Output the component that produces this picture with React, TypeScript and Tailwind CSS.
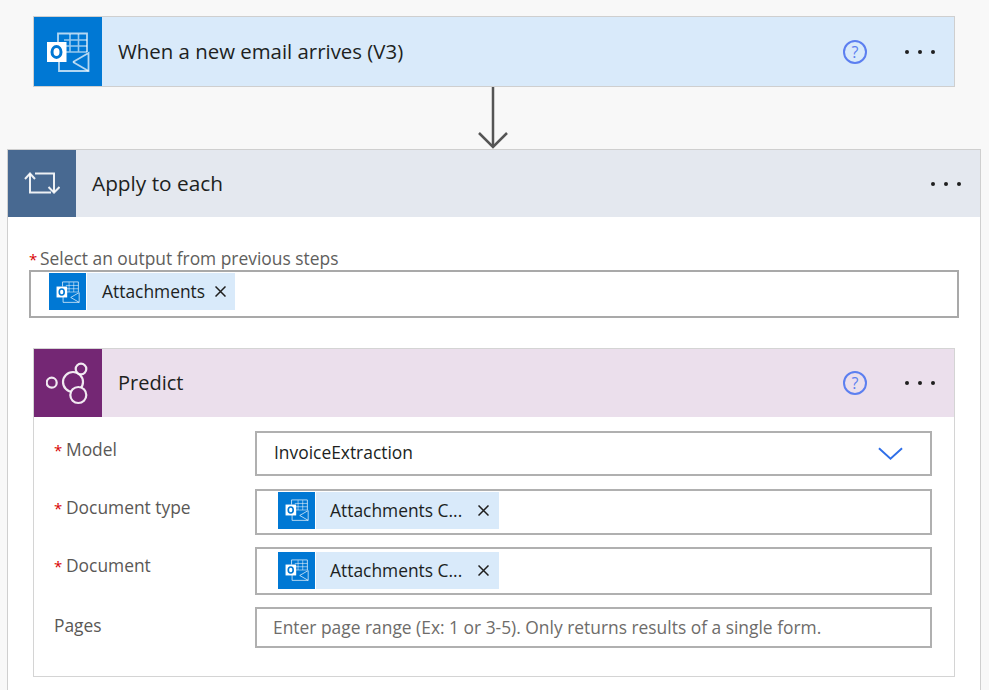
import { ReactNode } from 'react'

const FONT = 'font-["Open_Sans","Noto_Sans",sans-serif]'

function OutlookIcon({ size }: { size: number }) {
  return (
    <svg width={size} height={size} viewBox="0 0 44 44" fill="none">
      <path d="M12 12V3.500h29V22" stroke="#fff" strokeOpacity="0.7" strokeWidth="1.800" />
      <path d="M24 4v18M32.500 4v18M18 10h23M18 16h23M18 22h23" stroke="#fff" strokeOpacity="0.6" strokeWidth="1.600" />
      <path d="M13 30v11h29.500V23L27 32" stroke="#fff" strokeOpacity="0.7" strokeWidth="1.800" />
      <path d="M27 32l15.500 9" stroke="#fff" strokeOpacity="0.7" strokeWidth="1.800" />
      <rect x="1" y="12" width="19.500" height="20" fill="#fff" />
      <ellipse cx="10.500" cy="22" rx="4.500" ry="5.500" stroke="#0078d4" strokeWidth="3" />
    </svg>
  )
}

function PredictIcon() {
  return (
    <svg width="44" height="44" viewBox="0 0 44 44" fill="none" stroke="#fff" strokeOpacity="0.9" strokeWidth="2.200">
      <circle cx="5.700" cy="21.700" r="5" />
      <circle cx="27" cy="21" r="10" />
      <circle cx="35" cy="8" r="5.300" fill="#742774" />
      <circle cx="32.300" cy="34" r="8" fill="#742774" />
    </svg>
  )
}

function LoopIcon() {
  return (
    <svg width="36" height="28" viewBox="0 0 36 28" fill="none" stroke="#fff" strokeOpacity="0.9" strokeWidth="2">
      <path d="M6 4v18.500h21" />
      <path d="M1 9l5-5.500 5 5.500" />
      <path d="M11 3.500h19V22" />
      <path d="M24.500 17l5.500 5.500 5.500-5.500" />
    </svg>
  )
}

function Dots() {
  return (
    <div className="flex gap-[9px]">
      <span className="w-1 h-1 rounded-full bg-[#1f1f1f]" />
      <span className="w-1 h-1 rounded-full bg-[#1f1f1f]" />
      <span className="w-1 h-1 rounded-full bg-[#1f1f1f]" />
    </div>
  )
}

function Help() {
  return (
    <span className="w-6 h-6 mr-[38px] rounded-full border-2 border-[#5c7ff0] flex items-center justify-center text-[16px] leading-none text-[#5c7ff0]">
      ?
    </span>
  )
}

function Chip({ label, wide }: { label: string; wide?: boolean }) {
  return (
    <div className="flex h-[37px] items-stretch">
      <div className="w-[37px] bg-[#0078d4] flex items-center justify-center">
        <OutlookIcon size={24} />
      </div>
      <div className={`ml-px bg-[#d9eafa] flex items-center text-[17.400px] text-[#201f1e] ${wide ? 'w-[183px] pl-[14px]' : 'w-[148px] pl-[15px]'}`}>
        <span className={wide ? 'w-[148px]' : 'w-[113px]'}>{label}</span>
        <svg width="11" height="11" viewBox="0 0 11 11" fill="none" stroke="#201f1e" strokeWidth="1.500">
          <path d="M0.500 0.500l10 10M10.500 0.500l-10 10" />
        </svg>
      </div>
    </div>
  )
}

function Field({ label, required, height, mt, children }: { label: string; required?: boolean; height: string; mt: string; children: ReactNode }) {
  return (
    <div className={`flex ${mt}`}>
      <div className="w-[221px] pl-[20px] pt-[6px] text-[17.400px] leading-[24px] text-[#5a5856]">
        {required && <span className="inline-block w-[12px] text-[15px] text-[#d80000]">*</span>}
        {label}
      </div>
      <div className={`w-[677px] ${height} border-2 border-[#b0b0b0] flex items-center pl-[21px] pr-[27px]`}>
        {children}
      </div>
    </div>
  )
}

export default function App() {
  return (
    <div className={`${FONT} w-[989px] h-[690px] overflow-hidden bg-[#f8f8f8] pt-4`}>
      {/* trigger */}
      <div className="ml-[33px] w-[922px] h-[71px] border border-[#cfcfcf] bg-[#d9eafa] flex items-center">
        <div className="w-[68px] h-full bg-[#0078d4] flex items-center justify-center shrink-0">
          <OutlookIcon size={44} />
        </div>
        <div className="pl-4 flex-1 text-[20.400px] text-[#201f1e]">When a new email arrives (V3)</div>
        <Help />
        <Dots />
        <div className="w-[19px]" />
      </div>

      {/* connector */}
      <div className="h-[62px] flex justify-center pr-[3px]">
        <svg width="32" height="62" viewBox="0 0 32 62" fill="none" stroke="#555" strokeWidth="2.500">
          <path d="M16 0v60" />
          <path d="M2 46l14 14 14-14" />
        </svg>
      </div>

      {/* apply to each */}
      <div className="ml-[7px] w-[974px] h-[600px] border border-[#cfcfcf] border-b-0 bg-white">
        <div className="h-[67px] bg-[#e4e8ef] flex items-center">
          <div className="w-[68px] h-full bg-[#486991] flex items-center justify-center shrink-0">
            <LoopIcon />
          </div>
          <div className="pl-4 pt-px flex-1 text-[20.800px] text-[#201f1e]">Apply to each</div>
          <Dots />
          <div className="w-[19px]" />
        </div>

        <div className="pl-[21px] pt-[31px] text-[17.400px] leading-[21px] text-[#605e5c]">
          <span className="inline-block w-[11px] text-[15px] text-[#d80000]">*</span>Select an output from previous steps
        </div>
        <div className="ml-[21px] w-[930px] h-[48px] border-2 border-[#a9a9a9] pl-[18px] pt-px">
          <Chip label="Attachments" />
        </div>

        {/* predict */}
        <div className="ml-[25px] mt-[30px] w-[922px] h-[329px] border border-[#d4d4d4]">
          <div className="h-[68px] bg-[#ebdfec] flex items-center">
            <div className="w-[68px] h-full bg-[#742774] flex items-center justify-center shrink-0">
              <PredictIcon />
            </div>
            <div className="pl-4 flex-1 text-[20px] text-[#201f1e]">Predict</div>
            <Help />
            <Dots />
            <div className="w-[19px]" />
          </div>

          <Field label="Model" required height="h-[45px]" mt="mt-[14px]">
            <span className="flex-1 -ml-1 -mt-[2px] text-[17.400px] text-[#201f1e]">InvoiceExtraction</span>
            <svg width="25" height="15" viewBox="0 0 26 15" fill="none" stroke="#2f6fe8" strokeWidth="2">
              <path d="M1 2l12 11L25 2" />
            </svg>
          </Field>
          <Field label="Document type" required height="h-[46px]" mt="mt-[13px]">
            <div className="-mt-[4px]">
              <Chip label="Attachments C..." wide />
            </div>
          </Field>
          <Field label="Document" required height="h-[48px]" mt="mt-[12px]">
            <div className="-mt-[2px]">
              <Chip label="Attachments C..." wide />
            </div>
          </Field>
          <Field label="Pages" height="h-[41px]" mt="mt-[12px]">
            <span className="text-[17.400px] text-[#6e6c6a] whitespace-nowrap -ml-[5px]">
              Enter page range (Ex: 1 or 3-5). Only returns results of a single form.
            </span>
          </Field>
        </div>
      </div>
    </div>
  )
}
